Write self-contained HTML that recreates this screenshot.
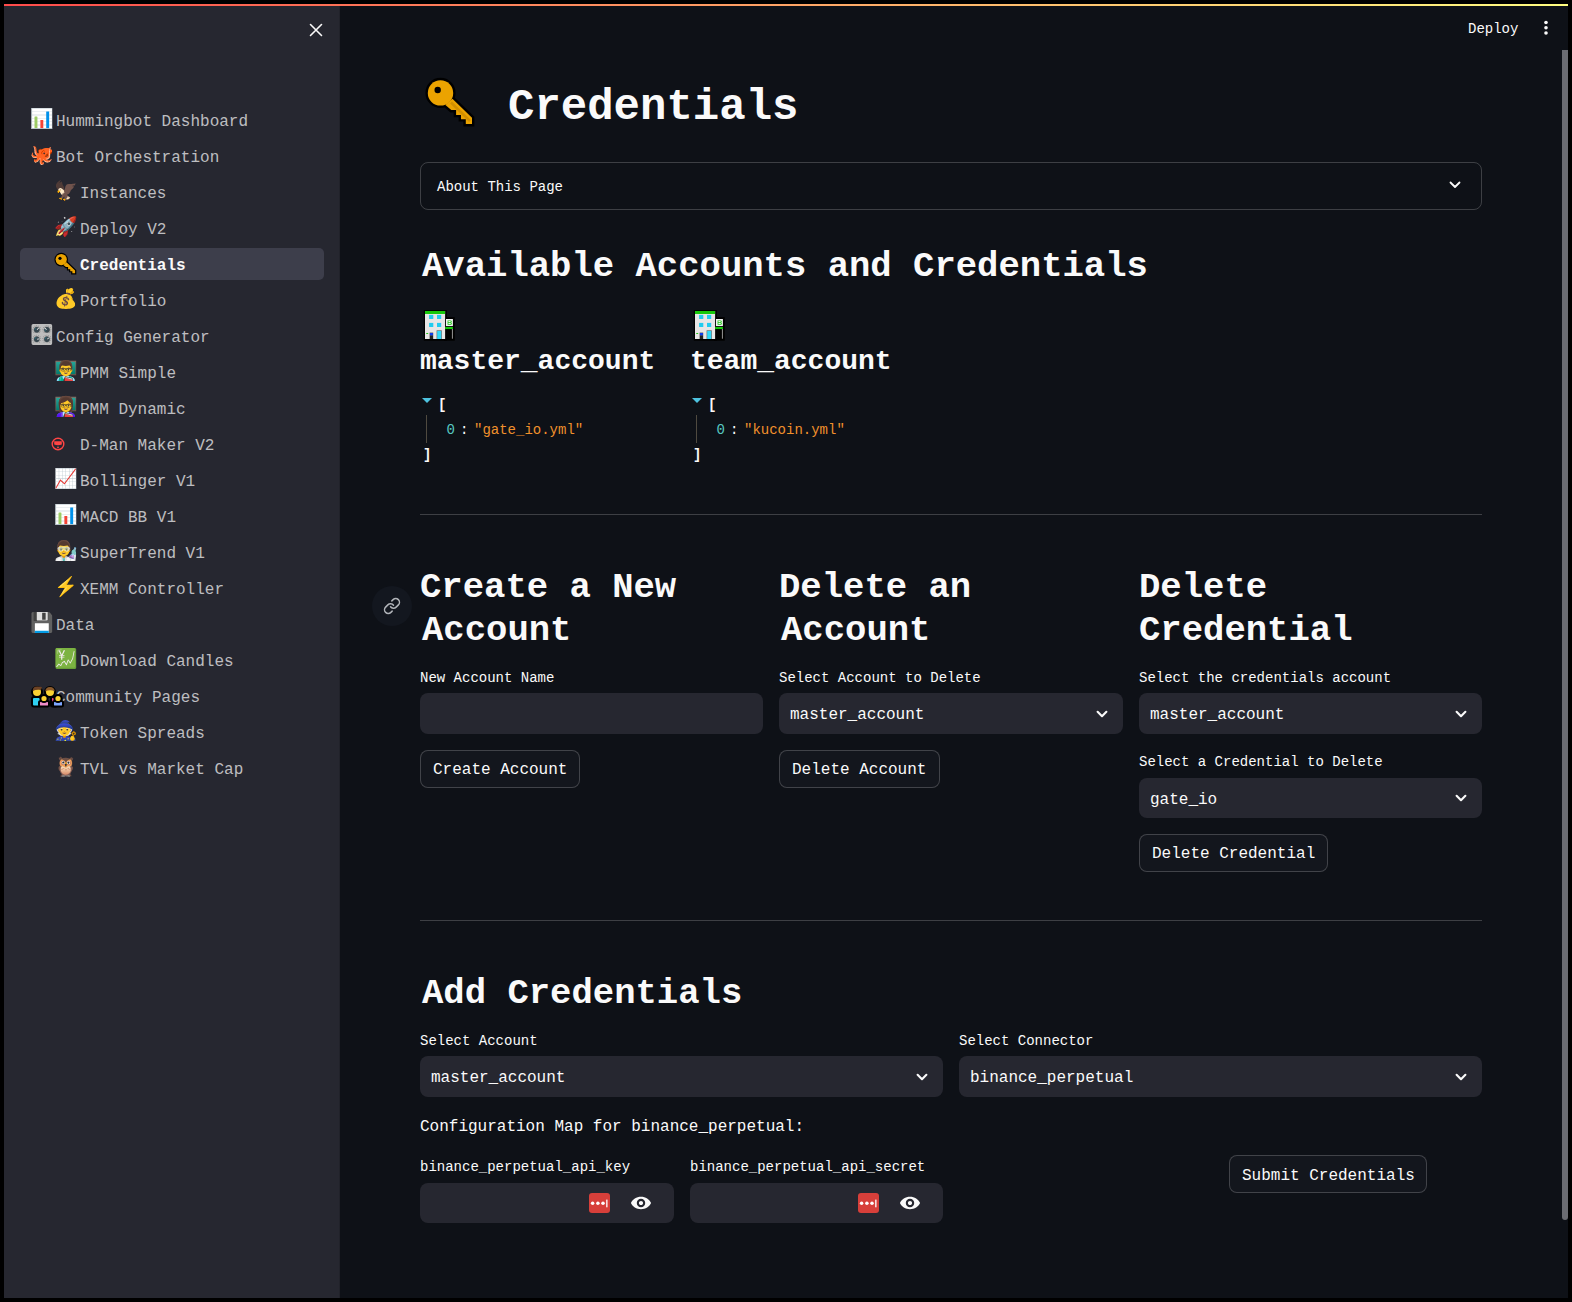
<!DOCTYPE html>
<html><head><meta charset="utf-8"><title>Credentials</title>
<style>
html,body{margin:0;padding:0;width:1572px;height:1302px;overflow:hidden;background:#000}
body{position:relative;font-family:"Liberation Mono",monospace;-webkit-font-smoothing:antialiased}
.t{position:absolute;white-space:pre;font-family:"Liberation Mono",monospace}
.r{position:absolute}
.emo{position:absolute;white-space:nowrap}
svg{display:block}
</style></head><body>
<div class="r" style="left:0px;top:0px;width:1572px;height:1302px;background:#000"></div>
<div class="r" style="left:4px;top:4px;width:1564px;height:1294px;background:#0e1117"></div>
<div class="r" style="left:4px;top:4px;width:336px;height:1294px;background:#262730"></div>
<div class="r" style="left:339px;top:4px;width:1px;height:1294px;background:rgba(0,0,0,0.12)"></div>
<div class="r" style="left:4px;top:4px;width:1564px;height:2px;background:linear-gradient(90deg,#ff4b4b,#fffd80)"></div>
<svg class="r" style="left:309px;top:23px" width="14" height="14" viewBox="0 0 14 14"><path d="M1.5 1.5 L12.5 12.5 M12.5 1.5 L1.5 12.5" stroke="#fafafa" stroke-width="1.6" stroke-linecap="round"/></svg>
<div class="r" style="left:20px;top:248px;width:304px;height:32px;background:#3d3e4b;border-radius:5px"></div>
<div class="emo" style="left:29.9px;top:110.9px;font-size:19px;line-height:19px">📊</div>
<div class="t" style="left:56px;top:114px;font-size:16px;line-height:16px;color:rgba(250,250,250,0.72);font-weight:normal;">Hummingbot Dashboard</div>
<div class="emo" style="left:29.9px;top:146.9px;font-size:19px;line-height:19px"><span style="filter:hue-rotate(18deg) saturate(1.3)">🐙</span></div>
<div class="t" style="left:56px;top:150px;font-size:16px;line-height:16px;color:rgba(250,250,250,0.72);font-weight:normal;">Bot Orchestration</div>
<div class="emo" style="left:53.9px;top:182.9px;font-size:19px;line-height:19px">🦅</div>
<div class="t" style="left:80px;top:186px;font-size:16px;line-height:16px;color:rgba(250,250,250,0.72);font-weight:normal;">Instances</div>
<div class="emo" style="left:53.9px;top:218.9px;font-size:19px;line-height:19px">🚀</div>
<div class="t" style="left:80px;top:222px;font-size:16px;line-height:16px;color:rgba(250,250,250,0.72);font-weight:normal;">Deploy V2</div>
<div class="t" style="left:80px;top:258px;font-size:16px;line-height:16px;color:#fafafa;font-weight:bold;">Credentials</div>
<div class="emo" style="left:53.9px;top:290.9px;font-size:19px;line-height:19px">💰</div>
<div class="t" style="left:80px;top:294px;font-size:16px;line-height:16px;color:rgba(250,250,250,0.72);font-weight:normal;">Portfolio</div>
<div class="emo" style="left:29.9px;top:326.9px;font-size:19px;line-height:19px">🎛️</div>
<div class="t" style="left:56px;top:330px;font-size:16px;line-height:16px;color:rgba(250,250,250,0.72);font-weight:normal;">Config Generator</div>
<div class="emo" style="left:53.9px;top:362.9px;font-size:19px;line-height:19px">👨‍🏫</div>
<div class="t" style="left:80px;top:366px;font-size:16px;line-height:16px;color:rgba(250,250,250,0.72);font-weight:normal;">PMM Simple</div>
<div class="emo" style="left:53.9px;top:398.9px;font-size:19px;line-height:19px">👩‍🏫</div>
<div class="t" style="left:80px;top:402px;font-size:16px;line-height:16px;color:rgba(250,250,250,0.72);font-weight:normal;">PMM Dynamic</div>
<div class="t" style="left:80px;top:438px;font-size:16px;line-height:16px;color:rgba(250,250,250,0.72);font-weight:normal;">D-Man Maker V2</div>
<div class="emo" style="left:53.9px;top:470.9px;font-size:19px;line-height:19px">📈</div>
<div class="t" style="left:80px;top:474px;font-size:16px;line-height:16px;color:rgba(250,250,250,0.72);font-weight:normal;">Bollinger V1</div>
<div class="emo" style="left:53.9px;top:506.9px;font-size:19px;line-height:19px">📊</div>
<div class="t" style="left:80px;top:510px;font-size:16px;line-height:16px;color:rgba(250,250,250,0.72);font-weight:normal;">MACD BB V1</div>
<div class="emo" style="left:53.9px;top:542.9px;font-size:19px;line-height:19px">👨‍🔬</div>
<div class="t" style="left:80px;top:546px;font-size:16px;line-height:16px;color:rgba(250,250,250,0.72);font-weight:normal;">SuperTrend V1</div>
<div class="emo" style="left:53.9px;top:578.9px;font-size:19px;line-height:19px">⚡️</div>
<div class="t" style="left:80px;top:582px;font-size:16px;line-height:16px;color:rgba(250,250,250,0.72);font-weight:normal;">XEMM Controller</div>
<div class="emo" style="left:29.9px;top:614.9px;font-size:19px;line-height:19px">💾</div>
<div class="t" style="left:56px;top:618px;font-size:16px;line-height:16px;color:rgba(250,250,250,0.72);font-weight:normal;">Data</div>
<div class="emo" style="left:53.9px;top:650.9px;font-size:19px;line-height:19px">💹</div>
<div class="t" style="left:80px;top:654px;font-size:16px;line-height:16px;color:rgba(250,250,250,0.72);font-weight:normal;">Download Candles</div>
<div class="t" style="left:56px;top:690px;font-size:16px;line-height:16px;color:rgba(250,250,250,0.72);font-weight:normal;">Community Pages</div>
<div class="emo" style="left:53.9px;top:722.9px;font-size:19px;line-height:19px">🧙</div>
<div class="t" style="left:80px;top:726px;font-size:16px;line-height:16px;color:rgba(250,250,250,0.72);font-weight:normal;">Token Spreads</div>
<div class="emo" style="left:53.9px;top:758.9px;font-size:19px;line-height:19px">🦉</div>
<div class="t" style="left:80px;top:762px;font-size:16px;line-height:16px;color:rgba(250,250,250,0.72);font-weight:normal;">TVL vs Market Cap</div>
<svg class="r" style="left:51px;top:437px" width="14" height="14" viewBox="0 0 14 14"><circle cx="7" cy="7" r="5.8" fill="none" stroke="#ff4545" stroke-width="1.4"/><path d="M3.2 4.3 H10.8 V7.6 Q7 8.8 3.2 7.6 Z" fill="#ff4545"/><circle cx="7" cy="10.3" r="0.9" fill="#ff4545"/></svg>
<svg class="r" style="left:30px;top:684px" width="35" height="24" viewBox="0 0 35 24"><g stroke="#000" stroke-width="2" stroke-linejoin="round"><rect x="2" y="13" width="9" height="9.5" rx="2" fill="#2fd0f0"/><circle cx="7" cy="8" r="5" fill="#fcd232"/><rect x="21" y="13" width="6" height="9.5" rx="1.5" fill="#ef3f8a"/><circle cx="20" cy="8" r="5" fill="#fcd232"/><rect x="9" y="17" width="10" height="5.5" rx="1.5" fill="#f08cc8"/><circle cx="14" cy="14.5" r="3.6" fill="#fcd232"/><rect x="23" y="17" width="10" height="5.5" rx="1.5" fill="#7ea6ff"/><circle cx="28" cy="14.5" r="3.6" fill="#fcd232"/></g><path d="M2.6 7 Q3 2.5 7 2.6 Q10 2.5 12 3.2 L11 6 Q7 5 2.6 7Z" fill="#6b4226"/><path d="M15.2 7.5 Q15.5 3 20 3 Q24.5 3 24.8 7.5 Q20 5 15.2 7.5Z" fill="#8a5a2b"/></svg>
<svg class="r" style="left:54px;top:252px" width="24" height="24" viewBox="424.1 75.7 54.5 54.5"><g fill="#000" stroke="#000" stroke-width="5.5" stroke-linejoin="miter"><circle cx="440.5" cy="92.9" r="12.7"/><path d="M445.4 105 L451.3 110 L456.1 110 L456.1 114.9 L461 114.9 L461 119.2 L465.8 119.2 L465.8 124 L472 124 L472 117.8 L452.4 98.8 Z"/></g><g fill="#eba300"><circle cx="440.5" cy="92.9" r="12.7"/><path d="M445.4 105 L451.3 110 L456.1 110 L456.1 114.9 L461 114.9 L461 119.2 L465.8 119.2 L465.8 124 L472 124 L472 117.8 L452.4 98.8 Z"/></g><circle cx="437.7" cy="90" r="3.6" fill="#000"/></svg>
<div class="t" style="left:1468px;top:22px;font-size:14px;line-height:14px;color:#fafafa;font-weight:normal;">Deploy</div>
<svg class="r" style="left:1542px;top:19px" width="8" height="18" viewBox="0 0 8 18"><circle cx="4" cy="3.5" r="1.8" fill="#fafafa"/><circle cx="4" cy="8.8" r="1.8" fill="#fafafa"/><circle cx="4" cy="14" r="1.8" fill="#fafafa"/></svg>
<div class="r" style="left:1562px;top:50px;width:6px;height:1170px;background:#6b6c72;border-radius:0 0 3px 3px"></div>
<svg class="r" style="left:420px;top:72px" width="60" height="62" viewBox="420 72 60 62"><g fill="#000" stroke="#000" stroke-width="4.8" stroke-linejoin="miter"><circle cx="440.5" cy="92.9" r="12.7"/><path d="M445.4 105 L451.3 110 L456.1 110 L456.1 114.9 L461 114.9 L461 119.2 L465.8 119.2 L465.8 124 L472 124 L472 117.8 L452.4 98.8 Z"/></g><g fill="#eba300"><circle cx="440.5" cy="92.9" r="12.7"/><path d="M445.4 105 L451.3 110 L456.1 110 L456.1 114.9 L461 114.9 L461 119.2 L465.8 119.2 L465.8 124 L472 124 L472 117.8 L452.4 98.8 Z"/></g><path d="M451 102.5 L470 121" stroke="#d18f00" stroke-width="2.6"/><circle cx="437.7" cy="90" r="3.2" fill="#000"/></svg>
<div class="t" style="left:508px;top:85px;font-size:44px;line-height:44px;color:#fafafa;font-weight:bold;">Credentials</div>
<div class="r" style="left:420px;top:162px;width:1062px;height:48px;border:1px solid rgba(250,250,250,0.2);border-radius:8px;box-sizing:border-box"></div>
<div class="t" style="left:437px;top:180px;font-size:14px;line-height:14px;color:#fafafa;font-weight:normal;">About This Page</div>
<svg class="r" style="left:1449px;top:181px" width="12" height="8" viewBox="0 0 12 8"><path d="M1.5 1.5 L6 6 L10.5 1.5" fill="none" stroke="#fafafa" stroke-width="1.8" stroke-linecap="round" stroke-linejoin="round"/></svg>
<div class="t" style="left:422px;top:249px;font-size:35.6px;line-height:35.6px;color:#fafafa;font-weight:bold;">Available Accounts and Credentials</div>
<svg class="r" style="left:418px;top:306px" width="42" height="38" viewBox="418 306 42 38"><rect x="423.8" y="310.1" width="23.1" height="30.6" fill="#000"/><rect x="444" y="317.1" width="10.8" height="23.6" fill="#000"/><rect x="425" y="311" width="20.1" height="28" fill="#e8e6e6"/><rect x="425" y="311" width="20.1" height="3" fill="#18c80c"/><rect x="429.1" y="314.9" width="4.2" height="4.1" fill="#22ccf0"/><rect x="437" y="314.9" width="4.2" height="4.1" fill="#22ccf0"/><rect x="429.1" y="322.9" width="4.2" height="4.1" fill="#22ccf0"/><rect x="437" y="322.9" width="4.2" height="4.1" fill="#22ccf0"/><rect x="436.6" y="330.3" width="5.2" height="8.7" fill="#666"/><rect x="437.2" y="330.9" width="4" height="8.1" fill="#30d8f8"/><rect x="429.6" y="332.6" width="3.6" height="6.4" fill="#444"/><rect x="430" y="333" width="2.9" height="2.3" fill="#0a3cf0"/><rect x="430" y="336" width="2.9" height="3" fill="#222"/><ellipse cx="427.2" cy="333.5" rx="1.2" ry="0.6" fill="#18c80c"/><rect x="446" y="319" width="6.9" height="7.1" fill="#f2f2f2"/><path d="M447.6 320.4 H450.6 Q451.8 320.4 451.8 321.6 Q451.8 322.5 451 322.6 Q451.9 322.8 451.9 323.7 Q451.9 324.8 450.6 324.8 H447.6 Z M448.4 321.1 V322.2 H450.6 V321.1 Z M448.4 323 V324.1 H450.7 V323 Z" fill="#18c80c" fill-rule="evenodd"/><rect x="445.1" y="327" width="7.8" height="2.1" fill="#18c80c"/><rect x="451.9" y="329" width="1.1" height="9.7" fill="#888"/></svg>
<div class="t" style="left:420px;top:348px;font-size:28px;line-height:28px;color:#fafafa;font-weight:bold;">master_account</div>
<svg class="r" style="left:422px;top:398px" width="10" height="6" viewBox="0 0 10 6"><path d="M0 0 L10 0 L5 5 Z" fill="#4ec3e0"/></svg>
<div class="t" style="left:438px;top:398px;font-size:14px;line-height:14px;color:#fafafa;font-weight:bold;">[</div>
<div class="r" style="left:426px;top:415px;width:1px;height:28px;background:rgba(200,180,140,0.35)"></div>
<div class="t" style="left:446.6px;top:423px;font-size:14px;line-height:14px;color:#56c8c2;font-weight:normal;">0</div>
<div class="t" style="left:460px;top:423px;font-size:14px;line-height:14px;color:#fafafa;font-weight:normal;">:</div>
<div class="t" style="left:474px;top:423px;font-size:14px;line-height:14px;color:#f0902c;font-weight:normal;">"gate_io.yml"</div>
<div class="t" style="left:423px;top:448px;font-size:14px;line-height:14px;color:#fafafa;font-weight:bold;">]</div>
<svg class="r" style="left:688px;top:306px" width="42" height="38" viewBox="418 306 42 38"><rect x="423.8" y="310.1" width="23.1" height="30.6" fill="#000"/><rect x="444" y="317.1" width="10.8" height="23.6" fill="#000"/><rect x="425" y="311" width="20.1" height="28" fill="#e8e6e6"/><rect x="425" y="311" width="20.1" height="3" fill="#18c80c"/><rect x="429.1" y="314.9" width="4.2" height="4.1" fill="#22ccf0"/><rect x="437" y="314.9" width="4.2" height="4.1" fill="#22ccf0"/><rect x="429.1" y="322.9" width="4.2" height="4.1" fill="#22ccf0"/><rect x="437" y="322.9" width="4.2" height="4.1" fill="#22ccf0"/><rect x="436.6" y="330.3" width="5.2" height="8.7" fill="#666"/><rect x="437.2" y="330.9" width="4" height="8.1" fill="#30d8f8"/><rect x="429.6" y="332.6" width="3.6" height="6.4" fill="#444"/><rect x="430" y="333" width="2.9" height="2.3" fill="#0a3cf0"/><rect x="430" y="336" width="2.9" height="3" fill="#222"/><ellipse cx="427.2" cy="333.5" rx="1.2" ry="0.6" fill="#18c80c"/><rect x="446" y="319" width="6.9" height="7.1" fill="#f2f2f2"/><path d="M447.6 320.4 H450.6 Q451.8 320.4 451.8 321.6 Q451.8 322.5 451 322.6 Q451.9 322.8 451.9 323.7 Q451.9 324.8 450.6 324.8 H447.6 Z M448.4 321.1 V322.2 H450.6 V321.1 Z M448.4 323 V324.1 H450.7 V323 Z" fill="#18c80c" fill-rule="evenodd"/><rect x="445.1" y="327" width="7.8" height="2.1" fill="#18c80c"/><rect x="451.9" y="329" width="1.1" height="9.7" fill="#888"/></svg>
<div class="t" style="left:690px;top:348px;font-size:28px;line-height:28px;color:#fafafa;font-weight:bold;">team_account</div>
<svg class="r" style="left:692px;top:398px" width="10" height="6" viewBox="0 0 10 6"><path d="M0 0 L10 0 L5 5 Z" fill="#4ec3e0"/></svg>
<div class="t" style="left:708px;top:398px;font-size:14px;line-height:14px;color:#fafafa;font-weight:bold;">[</div>
<div class="r" style="left:696px;top:415px;width:1px;height:28px;background:rgba(200,180,140,0.35)"></div>
<div class="t" style="left:716.6px;top:423px;font-size:14px;line-height:14px;color:#56c8c2;font-weight:normal;">0</div>
<div class="t" style="left:730px;top:423px;font-size:14px;line-height:14px;color:#fafafa;font-weight:normal;">:</div>
<div class="t" style="left:744px;top:423px;font-size:14px;line-height:14px;color:#f0902c;font-weight:normal;">"kucoin.yml"</div>
<div class="t" style="left:693px;top:448px;font-size:14px;line-height:14px;color:#fafafa;font-weight:bold;">]</div>
<div class="r" style="left:420px;top:514px;width:1062px;height:1px;background:rgba(250,250,250,0.2)"></div>
<div class="r" style="left:372px;top:586px;width:40px;height:40px;background:#13171f;border-radius:50%"></div>
<svg class="r" style="left:383px;top:597px" width="18" height="18" viewBox="0 0 24 24" fill="none" stroke="#b0b3b8" stroke-width="2" stroke-linecap="round" stroke-linejoin="round"><path d="M10 13a5 5 0 0 0 7.54.54l3-3a5 5 0 0 0-7.07-7.07l-1.72 1.71"/><path d="M14 11a5 5 0 0 0-7.54-.54l-3 3a5 5 0 0 0 7.07 7.07l1.71-1.71"/></svg>
<div class="t" style="left:420px;top:570px;font-size:35.6px;line-height:35.6px;color:#fafafa;font-weight:bold;">Create a New</div>
<div class="t" style="left:422px;top:613px;font-size:35.6px;line-height:35.6px;color:#fafafa;font-weight:bold;">Account</div>
<div class="t" style="left:779px;top:570px;font-size:35.6px;line-height:35.6px;color:#fafafa;font-weight:bold;">Delete an</div>
<div class="t" style="left:781px;top:613px;font-size:35.6px;line-height:35.6px;color:#fafafa;font-weight:bold;">Account</div>
<div class="t" style="left:1139px;top:570px;font-size:35.6px;line-height:35.6px;color:#fafafa;font-weight:bold;">Delete</div>
<div class="t" style="left:1139px;top:613px;font-size:35.6px;line-height:35.6px;color:#fafafa;font-weight:bold;">Credential</div>
<div class="t" style="left:420px;top:671px;font-size:14px;line-height:14px;color:#fafafa;font-weight:normal;">New Account Name</div>
<div class="r" style="left:420px;top:693px;width:343px;height:41px;background:#262730;border-radius:8px"></div>
<div class="r" style="left:420px;top:750px;width:160px;height:38px;border:1px solid rgba(250,250,250,0.2);border-radius:8px;box-sizing:border-box;background:#13161d"></div>
<div class="t" style="left:433px;top:762px;font-size:16px;line-height:16px;color:#fafafa;font-weight:normal;">Create Account</div>
<div class="t" style="left:779px;top:671px;font-size:14px;line-height:14px;color:#fafafa;font-weight:normal;">Select Account to Delete</div>
<div class="r" style="left:779px;top:693px;width:344px;height:41px;background:#262730;border-radius:8px"></div>
<div class="t" style="left:790px;top:707px;font-size:16px;line-height:16px;color:#fafafa;font-weight:normal;">master_account</div>
<div class="r" style="left:1095.8px;top:709.5px"><svg width="12" height="9" viewBox="0 0 12 9"><path d="M1.6 1.8 L6 6.2 L10.4 1.8" fill="none" stroke="#fafafa" stroke-width="2.1" stroke-linecap="round" stroke-linejoin="round"/></svg></div>
<div class="r" style="left:779px;top:750px;width:161px;height:38px;border:1px solid rgba(250,250,250,0.2);border-radius:8px;box-sizing:border-box;background:#13161d"></div>
<div class="t" style="left:792px;top:762px;font-size:16px;line-height:16px;color:#fafafa;font-weight:normal;">Delete Account</div>
<div class="t" style="left:1139px;top:671px;font-size:14px;line-height:14px;color:#fafafa;font-weight:normal;">Select the credentials account</div>
<div class="r" style="left:1139px;top:693px;width:343px;height:41px;background:#262730;border-radius:8px"></div>
<div class="t" style="left:1150px;top:707px;font-size:16px;line-height:16px;color:#fafafa;font-weight:normal;">master_account</div>
<div class="r" style="left:1454.8px;top:709.5px"><svg width="12" height="9" viewBox="0 0 12 9"><path d="M1.6 1.8 L6 6.2 L10.4 1.8" fill="none" stroke="#fafafa" stroke-width="2.1" stroke-linecap="round" stroke-linejoin="round"/></svg></div>
<div class="t" style="left:1139px;top:755px;font-size:14px;line-height:14px;color:#fafafa;font-weight:normal;">Select a Credential to Delete</div>
<div class="r" style="left:1139px;top:778px;width:343px;height:40px;background:#262730;border-radius:8px"></div>
<div class="t" style="left:1150px;top:792px;font-size:16px;line-height:16px;color:#fafafa;font-weight:normal;">gate_io</div>
<div class="r" style="left:1454.8px;top:794.0px"><svg width="12" height="9" viewBox="0 0 12 9"><path d="M1.6 1.8 L6 6.2 L10.4 1.8" fill="none" stroke="#fafafa" stroke-width="2.1" stroke-linecap="round" stroke-linejoin="round"/></svg></div>
<div class="r" style="left:1139px;top:834px;width:189px;height:38px;border:1px solid rgba(250,250,250,0.2);border-radius:8px;box-sizing:border-box;background:#13161d"></div>
<div class="t" style="left:1152px;top:846px;font-size:16px;line-height:16px;color:#fafafa;font-weight:normal;">Delete Credential</div>
<div class="r" style="left:420px;top:920px;width:1062px;height:1px;background:rgba(250,250,250,0.2)"></div>
<div class="t" style="left:422px;top:976px;font-size:35.6px;line-height:35.6px;color:#fafafa;font-weight:bold;">Add Credentials</div>
<div class="t" style="left:420px;top:1034px;font-size:14px;line-height:14px;color:#fafafa;font-weight:normal;">Select Account</div>
<div class="r" style="left:420px;top:1056px;width:523px;height:41px;background:#262730;border-radius:8px"></div>
<div class="t" style="left:431px;top:1070px;font-size:16px;line-height:16px;color:#fafafa;font-weight:normal;">master_account</div>
<div class="r" style="left:915.8px;top:1072.5px"><svg width="12" height="9" viewBox="0 0 12 9"><path d="M1.6 1.8 L6 6.2 L10.4 1.8" fill="none" stroke="#fafafa" stroke-width="2.1" stroke-linecap="round" stroke-linejoin="round"/></svg></div>
<div class="t" style="left:959px;top:1034px;font-size:14px;line-height:14px;color:#fafafa;font-weight:normal;">Select Connector</div>
<div class="r" style="left:959px;top:1056px;width:523px;height:41px;background:#262730;border-radius:8px"></div>
<div class="t" style="left:970px;top:1070px;font-size:16px;line-height:16px;color:#fafafa;font-weight:normal;">binance_perpetual</div>
<div class="r" style="left:1454.8px;top:1072.5px"><svg width="12" height="9" viewBox="0 0 12 9"><path d="M1.6 1.8 L6 6.2 L10.4 1.8" fill="none" stroke="#fafafa" stroke-width="2.1" stroke-linecap="round" stroke-linejoin="round"/></svg></div>
<div class="t" style="left:420px;top:1119px;font-size:16px;line-height:16px;color:#fafafa;font-weight:normal;">Configuration Map for binance_perpetual:</div>
<div class="t" style="left:420px;top:1160px;font-size:14px;line-height:14px;color:#fafafa;font-weight:normal;">binance_perpetual_api_key</div>
<div class="r" style="left:420px;top:1183px;width:254px;height:40px;background:#262730;border-radius:8px"></div>
<div class="r" style="left:588.7px;top:1192.6px"><div style="width:21px;height:20.5px;background:#d73f3a;border-radius:3px;position:relative"><svg style="position:absolute;left:0;top:0" width="21" height="20.5" viewBox="0 0 21 20.5"><circle cx="3.6" cy="10.2" r="1.75" fill="#fff"/><circle cx="8.9" cy="10.2" r="1.75" fill="#fff"/><circle cx="14" cy="10.2" r="1.75" fill="#fff"/><rect x="17.2" y="6.6" width="1.3" height="7.7" fill="#fff"/></svg></div></div>
<div class="r" style="left:630px;top:1192px"><svg width="22" height="22" viewBox="0 0 24 24"><path d="M12 5.2C7 5.2 2.73 8.11 1 12c1.73 3.89 6 6.8 11 6.8s9.27-2.91 11-6.8c-1.73-3.89-6-6.8-11-6.8zM12 16.6c-2.54 0-4.6-2.06-4.6-4.6s2.06-4.6 4.6-4.6 4.6 2.06 4.6 4.6-2.06 4.6-4.6 4.6zm0-6.9c-1.27 0-2.3 1.03-2.3 2.3s1.03 2.3 2.3 2.3 2.3-1.03 2.3-2.3-1.03-2.3-2.3-2.3z" fill="#fafafa"/></svg></div>
<div class="t" style="left:690px;top:1160px;font-size:14px;line-height:14px;color:#fafafa;font-weight:normal;">binance_perpetual_api_secret</div>
<div class="r" style="left:690px;top:1183px;width:253px;height:40px;background:#262730;border-radius:8px"></div>
<div class="r" style="left:857.7px;top:1192.6px"><div style="width:21px;height:20.5px;background:#d73f3a;border-radius:3px;position:relative"><svg style="position:absolute;left:0;top:0" width="21" height="20.5" viewBox="0 0 21 20.5"><circle cx="3.6" cy="10.2" r="1.75" fill="#fff"/><circle cx="8.9" cy="10.2" r="1.75" fill="#fff"/><circle cx="14" cy="10.2" r="1.75" fill="#fff"/><rect x="17.2" y="6.6" width="1.3" height="7.7" fill="#fff"/></svg></div></div>
<div class="r" style="left:899px;top:1192px"><svg width="22" height="22" viewBox="0 0 24 24"><path d="M12 5.2C7 5.2 2.73 8.11 1 12c1.73 3.89 6 6.8 11 6.8s9.27-2.91 11-6.8c-1.73-3.89-6-6.8-11-6.8zM12 16.6c-2.54 0-4.6-2.06-4.6-4.6s2.06-4.6 4.6-4.6 4.6 2.06 4.6 4.6-2.06 4.6-4.6 4.6zm0-6.9c-1.27 0-2.3 1.03-2.3 2.3s1.03 2.3 2.3 2.3 2.3-1.03 2.3-2.3-1.03-2.3-2.3-2.3z" fill="#fafafa"/></svg></div>
<div class="r" style="left:1229px;top:1155px;width:198px;height:38px;border:1px solid rgba(250,250,250,0.2);border-radius:8px;box-sizing:border-box;background:#13161d"></div>
<div class="t" style="left:1242px;top:1168px;font-size:16px;line-height:16px;color:#fafafa;font-weight:normal;">Submit Credentials</div>
</body></html>
